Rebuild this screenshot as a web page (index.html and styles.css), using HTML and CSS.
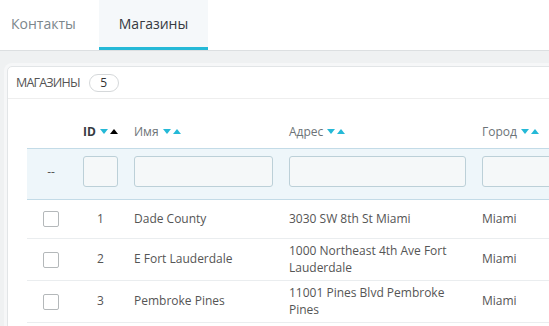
FILE: index.html
```html
<!DOCTYPE html>
<html lang="ru">
<head>
    <meta charset="UTF-8">
    <title>Магазины</title>
    <link rel="stylesheet" href="styles.css">
</head>
<body>
<div class="tabs">
    <a class="tab" href="#">Контакты</a>
    <a class="tab active" href="#">Магазины</a>
</div>

<div class="content">
    <div class="panel">
        <div class="panel-heading">
            Магазины <span class="badge">5</span>
        </div>
        <div class="panel-body">
            <table class="grid">
                <colgroup>
                    <col class="c-check">
                    <col class="c-id">
                    <col class="c-name">
                    <col class="c-addr">
                    <col class="c-city">
                </colgroup>
                <thead>
                    <tr class="heads">
                        <th></th>
                        <th class="th-id">ID <svg class="sort" width="18" height="6" viewBox="0 0 18 6"><polygon points="0,0 8,0 4,5" fill="#25b9d7"/><polygon points="10,5 18,5 14,0" fill="#000"/></svg></th>
                        <th>Имя <svg class="sort" width="18" height="6" viewBox="0 0 18 6"><polygon points="0,0 8,0 4,5" fill="#25b9d7"/><polygon points="10,5 18,5 14,0" fill="#25b9d7"/></svg></th>
                        <th>Адрес <svg class="sort" width="18" height="6" viewBox="0 0 18 6"><polygon points="0,0 8,0 4,5" fill="#25b9d7"/><polygon points="10,5 18,5 14,0" fill="#25b9d7"/></svg></th>
                        <th>Город <svg class="sort" width="18" height="6" viewBox="0 0 18 6"><polygon points="0,0 8,0 4,5" fill="#25b9d7"/><polygon points="10,5 18,5 14,0" fill="#25b9d7"/></svg></th>
                    </tr>
                    <tr class="filter">
                        <th class="center">--</th>
                        <th><input type="text"></th>
                        <th><input type="text"></th>
                        <th><input type="text"></th>
                        <th><input type="text"></th>
                    </tr>
                </thead>
                <tbody>
                    <tr>
                        <td class="center"><span class="check"></span></td>
                        <td class="center">1</td>
                        <td>Dade County</td>
                        <td>3030 SW 8th St Miami</td>
                        <td>Miami</td>
                    </tr>
                    <tr>
                        <td class="center"><span class="check"></span></td>
                        <td class="center">2</td>
                        <td>E Fort Lauderdale</td>
                        <td>1000 Northeast 4th Ave Fort Lauderdale</td>
                        <td>Miami</td>
                    </tr>
                    <tr>
                        <td class="center"><span class="check"></span></td>
                        <td class="center">3</td>
                        <td>Pembroke Pines</td>
                        <td>11001 Pines Blvd Pembroke Pines</td>
                        <td>Miami</td>
                    </tr>
                </tbody>
            </table>
        </div>
    </div>
</div>
</body>
</html>
```

FILE: styles.css
```css
body {
    margin: 0;
    font-family: "Open Sans", "Liberation Sans", sans-serif;
    font-size: 12px;
    color: #555;
    background-color: #eff1f2;
    overflow: hidden;
}

.tabs {
    display: flex;
    height: 50px;
    background-color: #fff;
    border-bottom: 1px solid #dcdfe1;
}
.tab {
    display: flex;
    align-items: center;
    padding: 0 20px 0 11px;
    font-size: 14px;
    color: #7c868b;
    text-decoration: none;
    height: 47px;
    border-bottom: 3px solid transparent;
}
.tab.active {
    padding: 0 20px;
    margin-left: 3px;
    color: #363a41;
    background-color: #f5f8fa;
    border-bottom-color: #25b9d7;
}

.content {
    padding: 15px 0 0 7px;
    height: 260px;
    overflow: hidden;
}

.panel {
    width: 640px;
    background-color: #fff;
    border: 1px solid #e2e5e7;
    border-radius: 5px;
    box-shadow: 0 0 0 3px #f6f7f8;
    height: 300px;
}
.panel-heading {
    display: flex;
    align-items: center;
    height: 31px;
    padding-left: 8px;
    border-bottom: 1px solid #eeeeee;
    font-size: 12.5px;
    letter-spacing: -0.8px;
    text-transform: uppercase;
    color: #555;
}
.badge {
    display: inline-block;
    margin-left: 9px;
    width: 28px;
    height: 16px;
    line-height: 16px;
    text-align: center;
    border: 1px solid #d5d8da;
    border-radius: 9px;
    font-size: 12px;
    letter-spacing: 0;
    color: #333;
}

.panel-body {
    padding: 16px 0 0 19px;
}

.grid {
    border-collapse: collapse;
    table-layout: fixed;
    width: 597px;
}
.c-check { width: 48px; }
.c-id { width: 51px; }
.c-name { width: 155px; }
.c-addr { width: 193px; }
.c-city { width: 150px; }

.heads th {
    height: 32px;
    padding: 0 8px 1px;
    text-align: left;
    font-weight: normal;
    font-size: 12px;
    color: #6c7377;
    white-space: nowrap;
}
.heads .th-id {
    font-weight: bold;
    color: #363a41;
}
.sort {
    margin-left: 1px;
    vertical-align: 1px;
}

.filter th {
    background-color: #eef6fa;
    border-top: 1px solid #c3dbe7;
    border-bottom: 1px solid #c3dbe7;
    padding: 7px 8px 12px;
    font-weight: normal;
    color: #555;
}
.filter input {
    display: block;
    box-sizing: border-box;
    width: 100%;
    height: 31px;
    border: 1px solid #bcd0d8;
    border-radius: 3px;
    background-color: #f5f8f9;
}

td {
    height: 39px;
    padding: 4px 8px;
    box-sizing: border-box;
    border-bottom: 1px solid #eaedef;
    font-size: 12px;
    line-height: 16.5px;
    color: #555;
}
.center {
    text-align: center;
}
.check {
    display: inline-block;
    width: 14px;
    height: 14px;
    border: 1px solid #b4b8ba;
    border-radius: 2px;
    vertical-align: middle;
    background-color: #fff;
}
```
